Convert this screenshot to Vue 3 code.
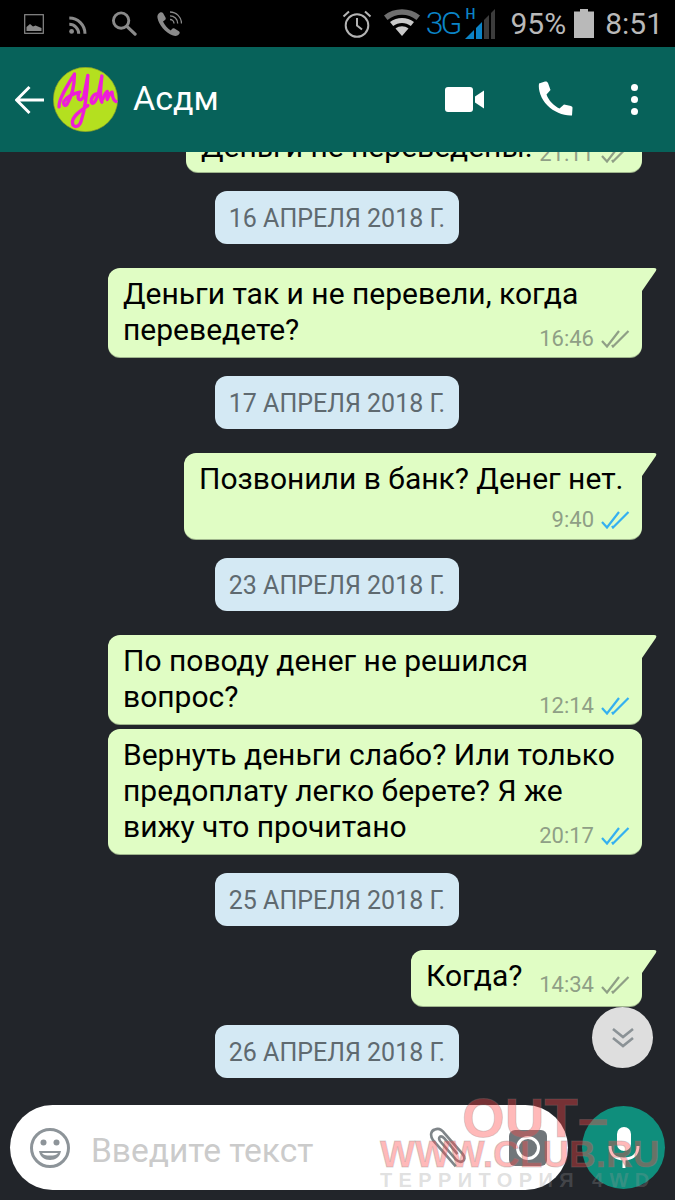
<script setup>
const items = [
  { id: 1, text: 'Деньги не переведены.', time: '21:11', size: 'top', tail: false },
  { id: 2, date: '16 АПРЕЛЯ 2018 Г.' },
  { id: 3, text: 'Деньги так и не перевели, когда переведете?', time: '16:46', tail: true },
  { id: 4, date: '17 АПРЕЛЯ 2018 Г.' },
  { id: 5, text: 'Позвонили в банк? Денег нет.', time: '9:40', read: true, size: 'stack', tail: true },
  { id: 6, date: '23 АПРЕЛЯ 2018 Г.' },
  { id: 7, text: 'По поводу денег не решился вопрос?', time: '12:14', read: true, tail: true },
  { id: 8, text: 'Вернуть деньги слабо? Или только предоплату легко берете? Я же вижу что прочитано', time: '20:17', read: true, size: 'next' },
  { id: 9, date: '25 АПРЕЛЯ 2018 Г.' },
  { id: 10, text: 'Когда?', time: '14:34', size: 'small', tail: true },
  { id: 11, date: '26 АПРЕЛЯ 2018 Г.' },
]
</script>

<template>
  <div class="phone">
    <!-- Status bar -->
    <div class="status-bar">
      <div class="status-left">
        <svg class="st-image" viewBox="0 0 20 20" width="20" height="20">
          <rect x="0.7" y="0.7" width="18.6" height="18.6" fill="none" stroke="#8a8a8a" stroke-width="1.2" />
          <path d="M2.5 17V13L6 10L9 12.5L11.5 11.5L17.5 14V17Z" fill="#8a8a8a" />
        </svg>
        <svg class="st-rss" viewBox="0 0 18 18" width="18" height="18">
          <circle cx="2.6" cy="15.4" r="2.4" fill="#8a8a8a" />
          <path d="M0.3 8.3A9.5 9.5 0 0 1 9.7 17.7M0.3 2A15.7 15.7 0 0 1 16 17.7" fill="none" stroke="#8a8a8a" stroke-width="3" />
        </svg>
        <svg class="st-search" viewBox="0 0 26 26" width="26" height="25">
          <circle cx="10" cy="10" r="8" fill="none" stroke="#8a8a8a" stroke-width="3" />
          <path d="M16 16L24.5 24" stroke="#8a8a8a" stroke-width="3.4" stroke-linecap="round" />
        </svg>
        <svg class="st-call" viewBox="0 0 26 26" width="26" height="26">
          <path d="M4 1.5C2 2.5 1 4.500 1.500 7C3 14 9 21.500 17 24.500C20 25.500 22.500 24.500 23.500 22.500C24 21.500 23.500 20.500 22.500 20L18.500 17.500C17.500 17 16.500 17.200 16 18L14.800 19.500C11.500 17.500 8.500 14 7 10.500L9 9C9.800 8.400 10 7.500 9.500 6.500L7 2C6.400 1.200 5 1 4 1.500Z" fill="#8a8a8a" />
          <path d="M14 8.500A4 4 0 0 1 18 12.500M14 4.800A7.700 7.700 0 0 1 21.700 12.500M14 1A11.500 11.500 0 0 1 25.500 12.500" fill="none" stroke="#8a8a8a" stroke-width="1.300" />
        </svg>
      </div>
      <div class="status-right">
        <svg class="st-alarm" viewBox="0 0 30 28" width="30" height="28">
          <circle cx="15" cy="15.500" r="11.300" fill="none" stroke="#b4b4b4" stroke-width="2" />
          <path d="M15 8V15.500L20 19.500M1.500 6.500L7 1.500M28.500 6.500L23 1.500" fill="none" stroke="#b4b4b4" stroke-width="2" />
        </svg>
        <svg class="st-wifi" viewBox="0 0 36 27" width="36" height="27">
          <path d="M0 6.500C10 -1.800 26 -1.800 36 6.500L32.500 11C24 4 12 4 3.500 11Z" fill="#6f6f6f" />
          <path d="M6 13C13 7.500 23 7.500 30 13L26.800 17C21.500 13 14.500 13 9.200 17Z" fill="#c9c9c9" />
          <path d="M11.500 19.500C15.500 16.500 20.500 16.500 24.500 19.500L18 27Z" fill="#c9c9c9" />
        </svg>
        <span class="st-3g">3G</span>
        <div class="st-signal">
          <span class="st-h">H</span>
          <svg viewBox="0 0 30 30" width="30" height="30">
            <path d="M0 30L9 21V30Z" fill="#0b84c7" />
            <path d="M11 19L17 13V30H11Z" fill="#0b84c7" />
            <path d="M19 11L24 6V30H19Z" fill="#3c3c3c" />
            <path d="M26 4L30 0V30H26Z" fill="#3c3c3c" />
          </svg>
        </div>
        <span class="st-text st-pct">95%</span>
        <svg class="st-battery" viewBox="0 0 20 29" width="20" height="29">
          <path d="M6 0H14V2.500H20V29H0V2.500H6Z" fill="#b9b9b9" />
        </svg>
        <span class="st-text st-time">8:51</span>
      </div>
    </div>

    <!-- Header -->
    <header class="chat-header">
      <svg class="back" viewBox="0 0 30 30" width="30" height="30">
        <path d="M1.500 15H29M14.500 2L1.500 15L14.500 28" fill="none" stroke="#fff" stroke-width="3" />
      </svg>
      <svg class="avatar" viewBox="24 19 194 194" width="65" height="65">
        <circle cx="121" cy="116" r="96" fill="#b4e01f" stroke="#8a9a2a" stroke-width="2" />
        <g fill="none" stroke="#ee1cd8" stroke-width="10" stroke-linecap="round" stroke-linejoin="round">
          <path d="M42 138C40 115 70 70 88 40C88 75 78 110 66 130C60 140 52 128 58 120C66 108 86 98 104 94" />
          <path d="M100 100C96 116 106 126 116 106L128 44C126 90 118 150 108 180C102 200 84 202 82 186C80 168 104 150 128 134" />
          <path d="M158 100C146 96 134 116 140 126C146 132 156 112 160 96L170 46C166 80 162 112 170 124" />
          <path d="M172 116C176 106 182 94 186 92C188 100 184 112 186 116C190 106 196 94 200 94C202 102 200 116 212 122" />
        </g>
      </svg>
      <span class="name">Асдм</span>
      <svg class="hd-video" viewBox="0 0 40 25" width="40" height="25">
        <rect x="0" y="0" width="28" height="25" rx="3" fill="#fff" />
        <path d="M30 9.500L39 3.500V21.500L30 15.500Z" fill="#fff" />
      </svg>
      <svg class="hd-phone" viewBox="0 0 35 35" width="35" height="35">
        <path d="M7 0.500L1 2.500C0 9 3 18 9.500 24.500C16 31 25.500 35 34 34.500L34.500 27C34.500 26 34 25.500 33 25L26 23.500L21.500 27.500C16 25 10.500 19.500 8.500 13.500L12.500 9L10 2C9.500 0.800 8.500 0.200 7 0.500Z" fill="#fff" />
      </svg>
      <div class="hd-dots">
        <i></i><i></i><i></i>
      </div>
    </header>

    <!-- Messages -->
    <main class="chat">
      <template v-for="item in items" :key="item.id">
        <div v-if="item.date" class="date-chip">{{ item.date }}</div>
        <div v-else class="bubble" :class="[item.size, { tailed: item.tail }]">
          <svg v-if="item.tail" class="tail" viewBox="0 0 16 24" width="16" height="24">
            <path d="M0 0H12Q15.500 0 13.800 3L0 23Z" fill="#e0fdc4" />
          </svg>
          <span class="text">{{ item.text }}</span>
          <span class="meta">
            <span class="time">{{ item.time }}</span>
            <svg viewBox="0 0 29 18" width="29" height="18">
              <path
                d="M1 11L6 16.500L18 1M11 15L12 16.500L27.500 1"
                fill="none"
                :stroke="item.read ? '#34b0f0' : '#8f9f86'"
                stroke-width="2.200"
              />
            </svg>
          </span>
        </div>
      </template>
    </main>

    <!-- Composer -->
    <footer class="composer">
      <div class="input">
        <svg class="smile" viewBox="0 0 40 40" width="40" height="40">
          <circle cx="20" cy="20" r="18.500" fill="none" stroke="#8d9499" stroke-width="3" />
          <circle cx="13.500" cy="14.500" r="3" fill="#8d9499" />
          <circle cx="26.500" cy="14.500" r="3" fill="#8d9499" />
          <path d="M9 23H31C30 29 25.500 32 20 32C14.500 32 10 29 9 23Z" fill="#8d9499" />
          <path d="M12 25H28C27 27 24 27.500 20 27.500C16 27.500 13 27 12 25Z" fill="#fff" />
        </svg>
        <span class="placeholder">Введите текст</span>
        <svg class="clip" viewBox="0 0 48 48" width="42" height="42">
          <path
            d="M34 45L8 15C4 9 6 4 10 3C14 1 18 3 21 7L42 31C45 35 44 38 42 39C39 41 37 40 34 37L16 16C14 13 15 12 16 11C18 10 19 11 21 13L36 31"
            fill="none"
            stroke="#7f8589"
            stroke-width="3"
          />
        </svg>
        <svg class="camera" viewBox="0 0 38 36" width="38" height="36">
          <rect x="0" y="0" width="38" height="36" rx="6" fill="#70767a" />
          <circle cx="19" cy="18" r="10.500" fill="none" stroke="#fff" stroke-width="3" />
        </svg>
      </div>
      <button class="mic" type="button">
        <svg viewBox="0 0 32 42" width="32" height="42">
          <rect x="9" y="0" width="14" height="24" rx="7" fill="#fff" />
          <path d="M2 19C2 28 8 32 16 32C24 32 30 28 30 19" fill="none" stroke="#fff" stroke-width="3" />
          <rect x="14.500" y="31" width="3" height="10" fill="#fff" />
        </svg>
      </button>
    </footer>

    <!-- Scroll down button -->
    <button class="scroll-down" type="button">
      <svg viewBox="0 0 24 22" width="24" height="22">
        <path d="M2 2L12 10L22 2M2 11L12 19L22 11" fill="none" stroke="#8b9296" stroke-width="2.600" />
      </svg>
    </button>

    <!-- Watermark -->
    <div class="watermark">
      <div class="wm-out">OUT–</div>
      <div class="wm-site">WWW.CLUB.RU</div>
      <div class="wm-sub">ТЕРРИТОРИЯ 4WD</div>
    </div>
  </div>
</template>

<style scoped>
.phone {
  position: relative;
  display: flex;
  flex-direction: column;
  width: 675px;
  height: 1200px;
  overflow: hidden;
  background: #22252a;
  font-family: Roboto, 'Noto Sans', sans-serif;
}

/* Status bar */
.status-bar {
  display: flex;
  align-items: center;
  justify-content: space-between;
  flex-shrink: 0;
  height: 47px;
  padding: 0 12px 0 24px;
  background: #000;
}

.status-left,
.status-right {
  display: flex;
  align-items: center;
}

.st-rss {
  margin-left: 25px;
  margin-top: 2px;
}

.st-search {
  margin-left: 24px;
}

.st-call {
  margin-left: 19px;
}

.st-wifi {
  margin-left: 12px;
  margin-top: -2px;
}

.st-3g {
  margin-left: 6px;
  font-size: 32px;
  font-weight: 300;
  letter-spacing: -3px;
  line-height: 47px;
  color: #0b84c7;
}

.st-signal {
  position: relative;
  width: 30px;
  height: 30px;
  margin-left: 6px;
}

.st-h {
  position: absolute;
  top: -2px;
  left: 0;
  font-size: 14px;
  line-height: 14px;
  font-weight: 500;
  color: #0b84c7;
}

.st-text {
  font-size: 30px;
  line-height: 47px;
  color: #b9b9b9;
}

.st-pct {
  margin-left: 15px;
}

.st-battery {
  margin-left: 8px;
}

.st-time {
  margin-left: 11px;
}

/* Header */
.chat-header {
  display: flex;
  align-items: center;
  flex-shrink: 0;
  height: 105px;
  padding-left: 15px;
  background: #07625a;
}

.back {
  flex-shrink: 0;
}

.avatar {
  flex-shrink: 0;
  margin-left: 8px;
}

.name {
  margin-left: 15px;
  margin-top: -3px;
  font-size: 34px;
  color: #fff;
}

.hd-video {
  margin-left: auto;
}

.hd-phone {
  margin-left: 53px;
  margin-top: -2px;
}

.hd-dots {
  display: flex;
  flex-direction: column;
  gap: 5px;
  margin-left: 58px;
  margin-right: 37px;
}

.hd-dots i {
  display: block;
  width: 7px;
  height: 7px;
  border-radius: 50%;
  background: #fff;
}

/* Messages */
.chat {
  flex: 1;
  min-height: 0;
  overflow: hidden;
  display: flex;
  flex-direction: column;
  padding-right: 33px;
}

.date-chip {
  flex-shrink: 0;
  align-self: flex-start;
  margin: 19px 0 24px 215px;
  width: 244px;
  height: 53px;
  box-sizing: border-box;
  border-radius: 12px;
  background: #d4e9f4;
  font-size: 25px;
  line-height: 56px;
  text-align: center;
  white-space: nowrap;
  color: #5f6a70;
}

.bubble {
  position: relative;
  flex-shrink: 0;
  display: flow-root;
  align-self: flex-end;
  box-sizing: border-box;
  width: 534px;
  padding: 8px 12px 9px 15px;
  border-radius: 12px;
  background: #e0fdc4;
  box-shadow: 0 1px 0 #9fb58c;
  font-size: 30px;
  line-height: 36px;
  color: #000;
}

.bubble.tailed {
  border-top-right-radius: 0;
}

.bubble.top {
  width: 456px;
  height: 51px;
  margin-top: -31px;
}

.bubble.top .meta {
  margin-top: 13px;
}

.bubble.small {
  width: 231px;
  height: 56px;
}

.bubble.next {
  margin-top: 5px;
}

.tail {
  position: absolute;
  top: 0;
  left: 100%;
}

.meta {
  display: flex;
  align-items: center;
  float: right;
  gap: 7px;
  height: 24px;
  margin-top: 15px;
  margin-bottom: -12px;
}

.time {
  font-size: 22px;
  line-height: 24px;
  color: #8f9f86;
}

.bubble.stack {
  width: 458px;
  padding-bottom: 7px;
}

.bubble.stack .meta {
  float: none;
  justify-content: flex-end;
  margin-top: 11px;
  margin-bottom: 0;
}

/* Composer */
.composer {
  display: flex;
  flex-shrink: 0;
  gap: 14px;
  height: 85px;
  padding: 0 10px 10px;
}

.input {
  display: flex;
  align-items: center;
  flex: 1;
  padding-left: 20px;
  border-radius: 43px;
  background: #fff;
}

.smile {
  flex-shrink: 0;
}

.placeholder {
  margin-left: 21px;
  margin-top: 5px;
  font-size: 33.5px;
  color: #cbcbcb;
}

.clip {
  margin-left: auto;
}

.camera {
  margin-left: 41px;
  margin-right: 21px;
  margin-top: 1px;
}

.mic {
  display: flex;
  align-items: center;
  justify-content: center;
  flex-shrink: 0;
  width: 83px;
  height: 83px;
  margin-top: 1px;
  padding: 0;
  border: none;
  border-radius: 50%;
  background: #0f8e7c;
}

/* Overlays */
.scroll-down {
  position: absolute;
  left: 592px;
  top: 1007px;
  display: flex;
  align-items: center;
  justify-content: center;
  width: 61px;
  height: 61px;
  padding: 0;
  border: none;
  border-radius: 50%;
  background: #dedede;
}

.watermark {
  position: absolute;
  left: 380px;
  top: 1090px;
  width: 295px;
  pointer-events: none;
  font-family: 'Liberation Sans', Arial, sans-serif;
  font-weight: 700;
  white-space: nowrap;
}

.wm-out {
  margin-left: 82px;
  font-size: 55px;
  line-height: 56px;
  color: rgba(255, 70, 70, 0.38);
  -webkit-text-stroke: 1px rgba(130, 130, 130, 0.25);
}

.wm-site {
  margin-top: -9px;
  font-size: 37px;
  line-height: 36px;
  color: rgba(255, 70, 70, 0.38);
  -webkit-text-stroke: 1px rgba(130, 130, 130, 0.3);
}

.wm-sub {
  margin-top: -4px;
  font-size: 20px;
  line-height: 22px;
  letter-spacing: 6.4px;
  color: rgba(150, 150, 150, 0.3);
}
</style>

<style>
html,
body {
  margin: 0;
  background: #22252a;
}
</style>
